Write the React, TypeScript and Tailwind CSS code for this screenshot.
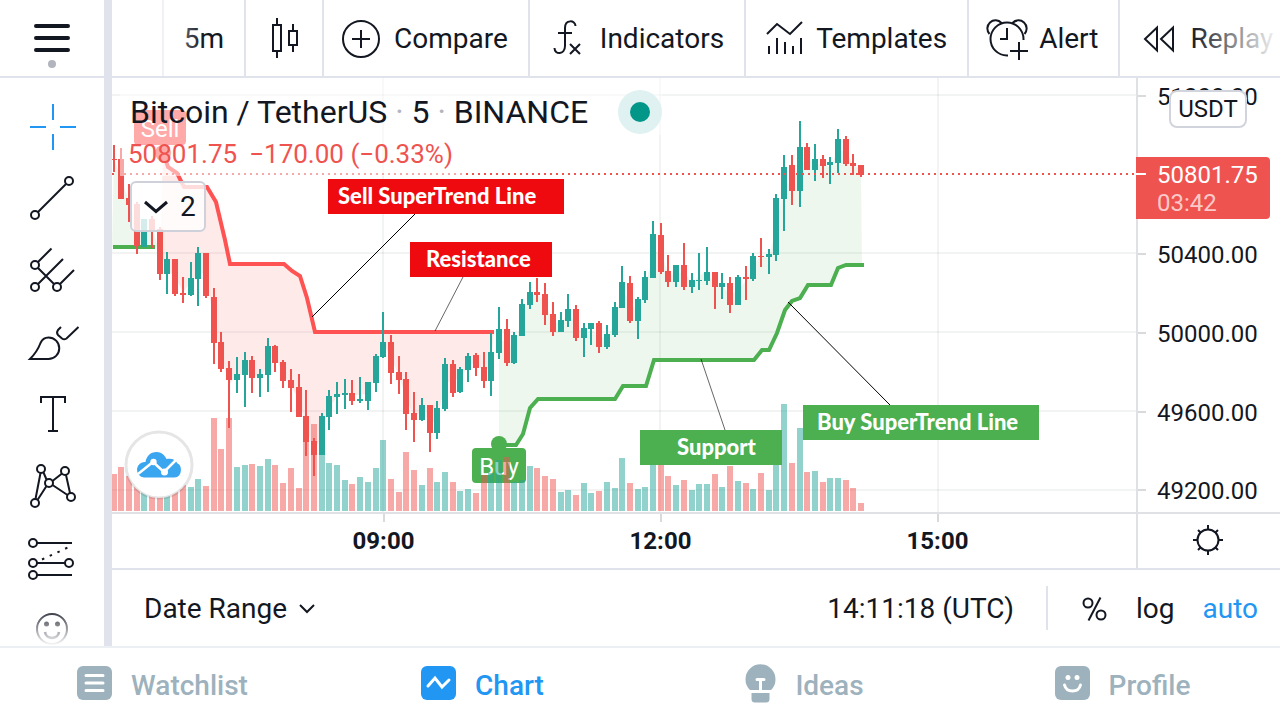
import type { ReactNode } from 'react';

type Dir = 'u' | 'd';
// high, open/close top, open/close bottom, low, direction, top of the volume bar
type Candle = [number, number, number, number, Dir, number];

const FIRST = -35;
const STEP = 7.708;
const ORIGIN_X = 383.3;
const VOLUME_BASE = 511;

const candles: Candle[] = [
  [145, 159, 160, 172, 'd', 474],
  [148, 159, 199, 199, 'd', 467],
  [184, 198, 205, 222, 'd', 476],
  [202, 204, 246, 254, 'd', 487],
  [219, 219, 247, 247, 'u', 490],
  [216, 219, 231, 248, 'd', 493],
  [227, 229, 274, 280, 'd', 490],
  [252, 259, 274, 294, 'u', 490],
  [259, 259, 294, 296, 'd', 492],
  [277, 293, 295, 303, 'd', 485],
  [262, 278, 295, 296, 'u', 487],
  [247, 253, 279, 306, 'u', 479],
  [253, 253, 296, 298, 'd', 486],
  [288, 297, 343, 364, 'd', 418],
  [332, 342, 369, 372, 'd', 449],
  [361, 368, 380, 428, 'd', 418],
  [357, 374, 380, 393, 'u', 467],
  [352, 360, 375, 407, 'u', 465],
  [356, 360, 378, 393, 'd', 464],
  [369, 374, 378, 397, 'u', 466],
  [338, 346, 375, 392, 'u', 459],
  [345, 346, 363, 372, 'd', 465],
  [360, 362, 381, 388, 'd', 483],
  [369, 380, 388, 412, 'd', 468],
  [374, 387, 417, 417, 'd', 488],
  [390, 416, 442, 456, 'd', 440],
  [438, 441, 455, 476, 'd', 424],
  [413, 416, 455, 455, 'u', 453],
  [390, 396, 417, 430, 'u', 463],
  [382, 394, 397, 414, 'u', 465],
  [379, 393, 395, 409, 'u', 480],
  [380, 393, 401, 405, 'd', 484],
  [377, 399, 401, 403, 'u', 477],
  [382, 382, 401, 410, 'u', 482],
  [354, 356, 383, 392, 'u', 468],
  [312, 342, 357, 358, 'u', 440],
  [335, 342, 373, 384, 'd', 479],
  [356, 372, 380, 394, 'd', 492],
  [372, 379, 414, 430, 'd', 452],
  [392, 413, 420, 442, 'd', 470],
  [398, 405, 420, 421, 'u', 485],
  [405, 405, 433, 452, 'd', 468],
  [401, 408, 433, 439, 'u', 482],
  [358, 364, 409, 411, 'u', 472],
  [360, 364, 393, 397, 'd', 482],
  [367, 369, 392, 393, 'u', 491],
  [353, 356, 370, 382, 'u', 489],
  [353, 355, 368, 376, 'd', 493],
  [352, 367, 381, 388, 'd', 475],
  [333, 352, 381, 396, 'u', 473],
  [307, 329, 353, 359, 'u', 460],
  [319, 329, 363, 366, 'd', 457],
  [332, 335, 363, 364, 'u', 482],
  [299, 304, 336, 336, 'u', 480],
  [282, 292, 305, 309, 'u', 466],
  [278, 292, 295, 302, 'd', 468],
  [283, 294, 315, 325, 'd', 476],
  [302, 314, 332, 336, 'd', 479],
  [312, 320, 332, 332, 'u', 492],
  [294, 309, 321, 327, 'u', 490],
  [305, 309, 338, 341, 'd', 495],
  [323, 328, 338, 357, 'u', 483],
  [323, 323, 329, 345, 'u', 493],
  [321, 323, 347, 353, 'd', 491],
  [325, 334, 347, 349, 'u', 482],
  [302, 307, 335, 337, 'u', 488],
  [266, 282, 308, 308, 'u', 458],
  [276, 283, 321, 323, 'd', 483],
  [297, 299, 321, 339, 'u', 489],
  [271, 277, 300, 303, 'u', 487],
  [221, 234, 278, 278, 'u', 455],
  [223, 235, 272, 274, 'd', 460],
  [255, 271, 282, 287, 'd', 476],
  [265, 265, 282, 287, 'u', 485],
  [243, 265, 287, 290, 'd', 480],
  [273, 280, 287, 293, 'u', 490],
  [253, 280, 281, 290, 'u', 484],
  [247, 272, 281, 285, 'u', 484],
  [272, 272, 287, 309, 'd', 474],
  [273, 283, 287, 299, 'u', 487],
  [277, 283, 305, 313, 'd', 466],
  [275, 277, 305, 305, 'u', 481],
  [266, 277, 279, 300, 'd', 483],
  [253, 256, 279, 281, 'u', 489],
  [238, 256, 257, 267, 'd', 473],
  [249, 254, 257, 274, 'u', 490],
  [194, 198, 255, 261, 'u', 458],
  [155, 167, 199, 231, 'u', 404],
  [155, 165, 191, 205, 'd', 463],
  [121, 147, 191, 207, 'u', 428],
  [143, 147, 170, 170, 'd', 472],
  [144, 159, 170, 181, 'u', 471],
  [155, 159, 166, 178, 'd', 482],
  [157, 162, 165, 184, 'u', 478],
  [129, 139, 163, 173, 'u', 478],
  [136, 139, 164, 166, 'd', 480],
  [154, 163, 166, 175, 'd', 488],
  [165, 165, 175, 177, 'd', 503],
];

const xAt = (n: number) => Math.round(ORIGIN_X + STEP * (n + FIRST));
const average = ([h, t, b, l]: Candle) => (h + t + b + l) / 4;

function averagePath(from: number, to: number) {
  return candles
    .slice(from, to + 1)
    .map((c, k) => `${xAt(from + k)},${average(c)}`)
    .join(' ');
}

const sellLine =
  '163,152 168,167 177,173 184,187 207,187 216,202 225,240 230,264 284,264 292,271 300,276 307,298 315,332 494,332';
const buyLine =
  '499,445 516,445 523,434 530,408 538,399 615,399 623,386 646,386 654,360 754,360 762,350 769,350 777,333 785,310 792,301 800,298 808,285 831,285 838,268 846,265 864,265';
const reversed = (points: string) => points.split(' ').reverse().join(' ');

function Callout({ x, y, w, color, tx, children }: { x: number; y: number; w: number; color: string; tx: number; children: string }) {
  return (
    <g>
      <rect x={x} y={y} width={w} height={35} fill={color} />
      <text x={tx} y={y + 25} className="fill-white font-[Lato,sans-serif] text-[22px] font-black">
        {children}
      </text>
    </g>
  );
}

function PriceChart() {
  return (
    <svg className="block h-full w-full" role="img" aria-label="Bitcoin price with SuperTrend">
      <g transform="translate(-112 -78)">
        <g fill="#2a2e39" fillOpacity="0.06">
          {[94, 252, 331, 410, 489].map((y) => (
            <rect key={y} x="112" y={y} width="4000" height="2" />
          ))}
          {[382, 659, 937].map((x) => (
            <rect key={x} x={x} y="78" width="2" height="2000" />
          ))}
        </g>

        <polygon points={`${averagePath(0, 6)} 161,247 112,247`} fill="#4caf50" fillOpacity="0.1" />
        <polygon points={`${averagePath(6, 49)} ${reversed(sellLine)}`} fill="#ff5252" fillOpacity="0.12" />
        <polygon points={`${averagePath(50, 97)} 862,265 ${reversed(buyLine).replace('864,265 ', '')}`} fill="#4caf50" fillOpacity="0.1" />
        <polyline points="113,247 155,247" fill="none" stroke="#4caf50" strokeWidth="4" />
        <polyline points={sellLine} fill="none" stroke="#ff5252" strokeWidth="4" />
        <polyline points={buyLine} fill="none" stroke="#4caf50" strokeWidth="4" />

        <circle cx="163" cy="153" r="8" fill="#ff5252" />
        <rect x="134" y="110" width="52" height="35" rx="4" fill="#ff5252" />
        <text x="160" y="137" textAnchor="middle" className="fill-white text-[24px]">
          Sell
        </text>
        <circle cx="499" cy="444" r="8" fill="#4caf50" />
        <rect x="472" y="448" width="54" height="35" rx="4" fill="#4caf50" />
        <text x="499" y="475" textAnchor="middle" className="fill-white text-[24px]">
          Buy
        </text>

        {candles.map(([, , , , dir, top], n) => (
          <rect
            key={n}
            x={xAt(n) - 3}
            y={top}
            width="6"
            height={VOLUME_BASE - top}
            fill={dir === 'u' ? '#26a69a' : '#ef5350'}
            fillOpacity="0.5"
          />
        ))}
        {candles.map(([high, top, bottom, low, dir], n) => (
          <g key={n} fill={dir === 'u' ? '#26a69a' : '#ef5350'}>
            <rect x={xAt(n) - 1} y={high} width="2" height={low - high} />
            <rect x={xAt(n) - 3} y={top} width="6" height={bottom - top} />
          </g>
        ))}

        <line x1="112" x2="4000" y1="174" y2="174" stroke="#ef5350" strokeWidth="2" strokeDasharray="2 4" />

        <g stroke="#000" strokeWidth="1">
          <line x1="415" y1="214" x2="312" y2="317" />
          <line x1="463" y1="277" x2="435" y2="331" strokeOpacity="0.6" />
          <line x1="701" y1="359" x2="725" y2="430" strokeOpacity="0.6" />
          <line x1="788" y1="302" x2="890" y2="405" />
        </g>
        <Callout x={328} y={179} w={236} tx={338} color="#ee0a0f">Sell SuperTrend Line</Callout>
        <Callout x={410} y={242} w={142} tx={426} color="#ee0a0f">Resistance</Callout>
        <Callout x={640} y={430} w={142} tx={677} color="#4caf50">Support</Callout>
        <Callout x={803} y={405} w={236} tx={817} color="#4caf50">Buy SuperTrend Line</Callout>

        <circle cx="159" cy="465" r="33" fill="#fff" stroke="#000" strokeOpacity="0.1" strokeWidth="3" />
        <path
          d="M144 477.500a7.500 7.500 0 0 1 1.500-15.500c1-6 5-10 11-10 5 0 8 3 10 7 6-1 9 1 11 4.500 5 1.500 5 14-3 14z"
          fill="#3ba6f0"
        />
        <path d="M138 474l15-12 11 10 13-13" fill="none" stroke="#fff" strokeWidth="2.500" />
        <circle cx="153.500" cy="462" r="3.200" fill="#fff" />
        <circle cx="164.500" cy="472" r="3.500" fill="#fff" />
      </g>
    </svg>
  );
}

function Icon({ children }: { children: ReactNode }) {
  return (
    <svg className="h-14 w-14 shrink-0" viewBox="0 0 56 56" fill="none" stroke="currentColor" strokeWidth="2" aria-hidden="true">
      {children}
    </svg>
  );
}

function ToolbarButton({ icon, label, last }: { icon: ReactNode; label: string; last?: boolean }) {
  return (
    <button
      type="button"
      className={
        last
          ? 'flex h-full shrink-0 items-center gap-1 pl-[10px]'
          : 'flex h-full shrink-0 items-center gap-1 border-r-2 border-[#e0e3eb] pr-5 pl-[10px]'
      }
    >
      <Icon>{icon}</Icon>
      <span className="pt-[2px]">{label}</span>
    </button>
  );
}

const dots = (points: number[][]) => points.map(([x, y]) => <circle key={`${x}-${y}`} cx={x} cy={y} r="4" />);

const tools: { name: string; icon: ReactNode }[] = [
  { name: 'Cross', icon: <path stroke="#2196f3" d="M29 5v16M29 35v16M6 28h16M36 28h16" /> },
  {
    name: 'Trend line',
    icon: (
      <>
        <path d="M14 41L42 13" />
        {dots([[45, 10], [11, 44]])}
      </>
    ),
  },
  {
    name: 'Pitchfork',
    icon: (
      <>
        <path d="M14 19L27.500 5.500M14 41l25-25M36 41l14-14M14 25l16 16" />
        {dots([[11, 22], [11, 44], [33, 44]])}
      </>
    ),
  },
  {
    name: 'Brush',
    icon: (
      <path d="M6 44c6-6 9-12 10.500-16C18 24.500 21 22.500 24.500 22.500a10.700 10.700 0 0 1 0 21.500zM37 12l-3 3c-1.500 2-1.500 3 0 5l4 3.500c2 1.500 3 1 4.500 0L54.500 12" />
    ),
  },
  { name: 'Text', icon: <path d="M17 16v-6h24v6M29 10v34M24 44h10" /> },
  {
    name: 'Pattern',
    icon: (
      <>
        <path d="M16.500 14L11.500 40M19.500 13.500l3 7M28.500 22L38 14.500M42 16l4 18M28.500 26L43.500 36M22.500 27L13.500 41" />
        {dots([[17, 10], [41, 12], [25, 24], [11, 44], [47, 38]])}
      </>
    ),
  },
  {
    name: 'Forecast',
    icon: (
      <>
        <path d="M13 12h35M13 32h28M13 44h35" />
        <path d="M18 28.500L46 15.500" strokeDasharray="2.500 6" />
        {dots([[9, 12], [9, 32], [45, 32], [9, 44]])}
      </>
    ),
  },
  {
    name: 'Emoji',
    icon: (
      <>
        <circle cx="28" cy="26" r="15" />
        <path d="M21 29c1 8 13 8 14 0" strokeWidth="2.500" />
        <circle cx="22.500" cy="21" r="2.500" fill="currentColor" stroke="none" />
        <circle cx="33.500" cy="21" r="2.500" fill="currentColor" stroke="none" />
      </>
    ),
  },
];

function Sidebar() {
  return (
    <aside className="relative flex w-[112px] shrink-0 flex-col overflow-hidden border-r-8 border-[#e0e3eb]">
      <button type="button" aria-label="Menu" className="flex h-[78px] shrink-0 justify-center border-b-2 border-[#e0e3eb]">
        <svg className="h-[76px] w-14" viewBox="0 0 56 76" aria-hidden="true">
          <path d="M12 26h32M12 38h32M12 50h32" stroke="currentColor" strokeWidth="4" strokeLinecap="round" />
          <circle cx="28" cy="64" r="4" fill="#b2b5be" />
        </svg>
      </button>
      <div className="flex h-0 grow flex-col items-center overflow-hidden pt-[13px]">
        {tools.map((tool) => (
          <button key={tool.name} type="button" aria-label={tool.name} className="flex h-[72px] shrink-0 items-center">
            <Icon>{tool.icon}</Icon>
          </button>
        ))}
      </div>
      <div className="pointer-events-none absolute inset-x-0 bottom-0 h-10 bg-linear-to-t from-white to-transparent" />
    </aside>
  );
}

function Toolbar() {
  return (
    <header className="relative flex h-[78px] shrink-0 overflow-hidden border-b-2 border-[#e0e3eb] text-[28px] leading-8">
      <div className="w-[52px] shrink-0 border-r-2 border-[#f0f1f6]" />
      <button type="button" className="h-full w-[82px] shrink-0 border-r-2 border-[#e0e3eb] pt-[2px]">5m</button>
      <button type="button" aria-label="Candles" className="flex h-full w-[78px] shrink-0 items-center justify-center border-r-2 border-[#e0e3eb]">
        <Icon>
          <path d="M17 15h8v26h-8zM21 8v7M21 41v7M33 21h8v14h-8zM37 14v7M37 35v7" />
        </Icon>
      </button>
      <ToolbarButton
        label="Compare"
        icon={
          <>
            <circle cx="27" cy="29" r="18" />
            <path d="M27 20v18M18 29h18" />
          </>
        }
      />
      <ToolbarButton
        label="Indicators"
        icon={<path d="M35.500 16c0-6-10.500-7-10.500 2v18c0 9-10.500 9-10.500 2M18 23h14M30 34l10 10M40 34L30 44" />}
      />
      <ToolbarButton label="Templates" icon={<path d="M11 24l10-10 13 10 12-12M13 36v8M21 28v16M29 32v12M37 36v8M45 28v16" />} />
      <ToolbarButton
        label="Alert"
        icon={
          <path d="M44.500 30v-1a16.500 16.500 0 1 0-16.500 16.500h1M10.500 24a8 8 0 0 1 12-11M45.500 24a8 8 0 0 0-12-11M28 18v11h-7M40 32v18M31 41h18" />
        }
      />
      <ToolbarButton last label="Replay" icon={<path d="M15 29l12-11.500v23zM31 29l12-11.500v23z" />} />
      <div className="pointer-events-none absolute inset-y-0 right-0 w-[90px] bg-linear-to-l from-white to-transparent" />
      <div className="pointer-events-none absolute inset-y-0 left-[52px] w-10 bg-linear-to-r from-white/60 to-transparent" />
    </header>
  );
}

function Legend() {
  return (
    <div className="absolute top-0 left-2 flex flex-col items-start">
      <div className="flex h-[57px] items-center bg-white/50 pt-[10px] pl-[10px] text-[32px] leading-10">
        <h1 className="whitespace-pre">
          Bitcoin / TetherUS<span className="text-[#b2b5be]"> · </span>5<span className="text-[#b2b5be]"> · </span>BINANCE
        </h1>
        <span className="ml-[30px] flex h-11 w-11 items-center justify-center rounded-full bg-[#dff1f0]">
          <span className="h-5 w-5 rounded-full bg-[#009688]" />
        </span>
      </div>
      <div className="flex h-[41px] items-center gap-3 bg-white/50 pr-3 pb-[2px] pl-2 text-[26px] text-[#ef5350]">
        <span>50801.75</span>
        <span>−170.00 (−0.33%)</span>
      </div>
      <button
        type="button"
        className="mt-[5px] ml-[10px] flex h-[51px] w-[76px] items-center gap-3 rounded-md border-2 border-[#ced0da] bg-white/80 pl-3 text-[28px]"
      >
        <svg className="h-4 w-6" viewBox="0 0 24 16" fill="none" aria-hidden="true">
          <path d="M1 3l11 9.500L23 3" stroke="currentColor" strokeWidth="3" />
        </svg>
        2
      </button>
    </div>
  );
}

function AxisLabel({ children }: { children: string }) {
  return (
    <div className="flex items-center gap-[11px]">
      <span className="h-[2px] w-2 bg-[#d9dadc]" />
      <span className="pt-[2px]">{children}</span>
    </div>
  );
}

function PriceAxis() {
  return (
    <div className="relative flex w-[144px] shrink-0 flex-col border-l-2 border-[#e0e1e4] text-2xl leading-8">
      <div className="flex h-[57px] shrink-0 items-start pt-[1px]">
        <AxisLabel>51200.00</AxisLabel>
      </div>
      <div className="flex h-[79px] shrink-0 items-start pt-[22px]">
        <div className="-ml-[2px] flex h-[62px] w-[134px] items-start gap-[11px] rounded-r bg-[#ef5350] text-white">
          <span className="mt-4 h-[2px] w-[10px] bg-white" />
          <div className="pt-1 leading-7">
            <div>50801.75</div>
            <div className="text-white/70">03:42</div>
          </div>
        </div>
      </div>
      {['50400.00', '50000.00', '49600.00'].map((price) => (
        <div key={price} className="flex h-[79px] shrink-0 items-center">
          <AxisLabel>{price}</AxisLabel>
        </div>
      ))}
      <div className="flex h-12 items-start pt-[22px]">
        <AxisLabel>49200.00</AxisLabel>
      </div>
      <button type="button" className="absolute top-3 right-[33px] h-[38px] w-[78px] rounded-lg border-2 border-[#d1d4dc] bg-white text-2xl leading-8">
        USDT
      </button>
    </div>
  );
}

function TimeAxis() {
  return (
    <div className="flex h-14 shrink-0 border-t-2 border-[#e0e1e4]">
      <div className="flex grow overflow-hidden pl-[133px]">
        {['09:00', '12:00', '15:00'].map((time) => (
          <div key={time} className="flex w-[277px] shrink-0 flex-col items-center text-2xl leading-8 font-bold">
            <span className="mb-[3px] h-2 w-[2px] bg-[#d9dadc]" />
            {time}
          </div>
        ))}
      </div>
      <button type="button" aria-label="Chart settings" className="flex w-[144px] shrink-0 items-center justify-center border-l-2 border-[#e0e1e4] pr-[2px] pb-[2px]">
        <svg className="h-8 w-8" viewBox="0 0 32 32" fill="none" stroke="currentColor" strokeWidth="2" aria-hidden="true">
          <circle cx="16" cy="16" r="10.500" />
          <path d="M16 1v5M16 26v5M1 16h5M26 16h5M6 6l3 3M23 23l3 3M26 6l-3 3M9 23l-3 3" />
        </svg>
      </button>
    </div>
  );
}

function RangeBar() {
  return (
    <div className="flex h-[78px] shrink-0 items-center border-t-2 border-[#e0e3eb] pr-[22px] pl-8 text-[28px]">
      <button type="button" className="flex items-center gap-3 pt-[2px]">
        Date Range
        <svg className="h-4 w-4" viewBox="0 0 16 16" fill="none" aria-hidden="true">
          <path d="M1 4l7 7 7-7" stroke="currentColor" strokeWidth="2" />
        </svg>
      </button>
      <button type="button" className="ml-auto pt-[2px]">14:11:18 (UTC)</button>
      <span className="mr-8 ml-8 h-11 w-[2px] bg-[#e0e3eb]" />
      <div className="flex items-center gap-7 pt-[2px]">
        <button type="button" aria-label="Percent scale">
          <svg className="h-7 w-[28px]" viewBox="0 0 28 28" fill="none" stroke="currentColor" strokeWidth="2" aria-hidden="true">
            <ellipse cx="8" cy="8" rx="4.500" ry="4.500" />
            <ellipse cx="21" cy="20" rx="4.500" ry="4.500" />
            <path d="M20.500 2.500L8.500 25.500" />
          </svg>
        </button>
        <button type="button">log</button>
        <button type="button" className="text-[#2196f3]">auto</button>
      </div>
    </div>
  );
}

const tabs: { label: string; active?: boolean; icon: ReactNode }[] = [
  {
    label: 'Watchlist',
    icon: (
      <>
        <rect y="2" width="35" height="34" rx="6" fill="currentColor" />
        <path d="M9 11.500h17M9 19h17M9 26.500h17" stroke="#fff" strokeWidth="3" strokeLinecap="round" />
      </>
    ),
  },
  {
    label: 'Chart',
    active: true,
    icon: (
      <>
        <rect y="2" width="35" height="34" rx="6" fill="currentColor" />
        <path d="M7 22l7-8 7 9 7-7" fill="none" stroke="#fff" strokeWidth="3" strokeLinecap="round" />
      </>
    ),
  },
  {
    label: 'Ideas',
    icon: (
      <g transform="translate(4 0)">
        <path d="M5 26a15 15 0 1 1 21 0z" fill="currentColor" />
        <path d="M6.500 29h18v6q0 3.500-3.500 3.500h-11q-3.500 0-3.500-3.500z" fill="currentColor" />
        <path d="M12 15.500h7M15.500 15.500V26" stroke="#fff" strokeWidth="3" strokeLinecap="round" />
      </g>
    ),
  },
  {
    label: 'Profile',
    icon: (
      <>
        <rect y="2" width="35" height="34" rx="6" fill="currentColor" />
        <circle cx="13" cy="13.500" r="2.500" fill="#fff" />
        <circle cx="22" cy="13.500" r="2.500" fill="#fff" />
        <path d="M9.500 21c2 8 14 8 16 0" fill="none" stroke="#fff" strokeWidth="3" strokeLinecap="round" />
      </>
    ),
  },
];

function BottomNav() {
  return (
    <nav className="grid h-[74px] shrink-0 grid-cols-4 border-t-2 border-[#ecf0f4]">
      {tabs.map((tab) => (
        <a
          key={tab.label}
          href={`#${tab.label.toLowerCase()}`}
          className={
            tab.active
              ? 'flex items-center justify-center gap-[19px] pt-[3px] pl-[5px] text-[28px] font-medium text-[#2196f3]'
              : 'flex items-center justify-center gap-[19px] pt-[3px] pl-[5px] text-[28px] font-medium text-[#9db2bd]'
          }
        >
          <svg className="mb-1 h-10 w-[35px]" viewBox="0 0 35 40" aria-hidden="true">{tab.icon}</svg>
          {tab.label}
        </a>
      ))}
    </nav>
  );
}

export default function App() {
  return (
    <div className="flex h-screen min-h-[720px] flex-col overflow-hidden bg-white font-[Roboto,sans-serif] text-[#131722]">
      <div className="flex min-h-0 grow">
        <Sidebar />
        <main className="flex min-w-0 grow flex-col">
          <Toolbar />
          <div className="flex min-h-0 grow">
            <div className="relative min-w-0 grow overflow-hidden">
              <PriceChart />
              <Legend />
            </div>
            <PriceAxis />
          </div>
          <TimeAxis />
          <RangeBar />
        </main>
      </div>
      <BottomNav />
    </div>
  );
}
